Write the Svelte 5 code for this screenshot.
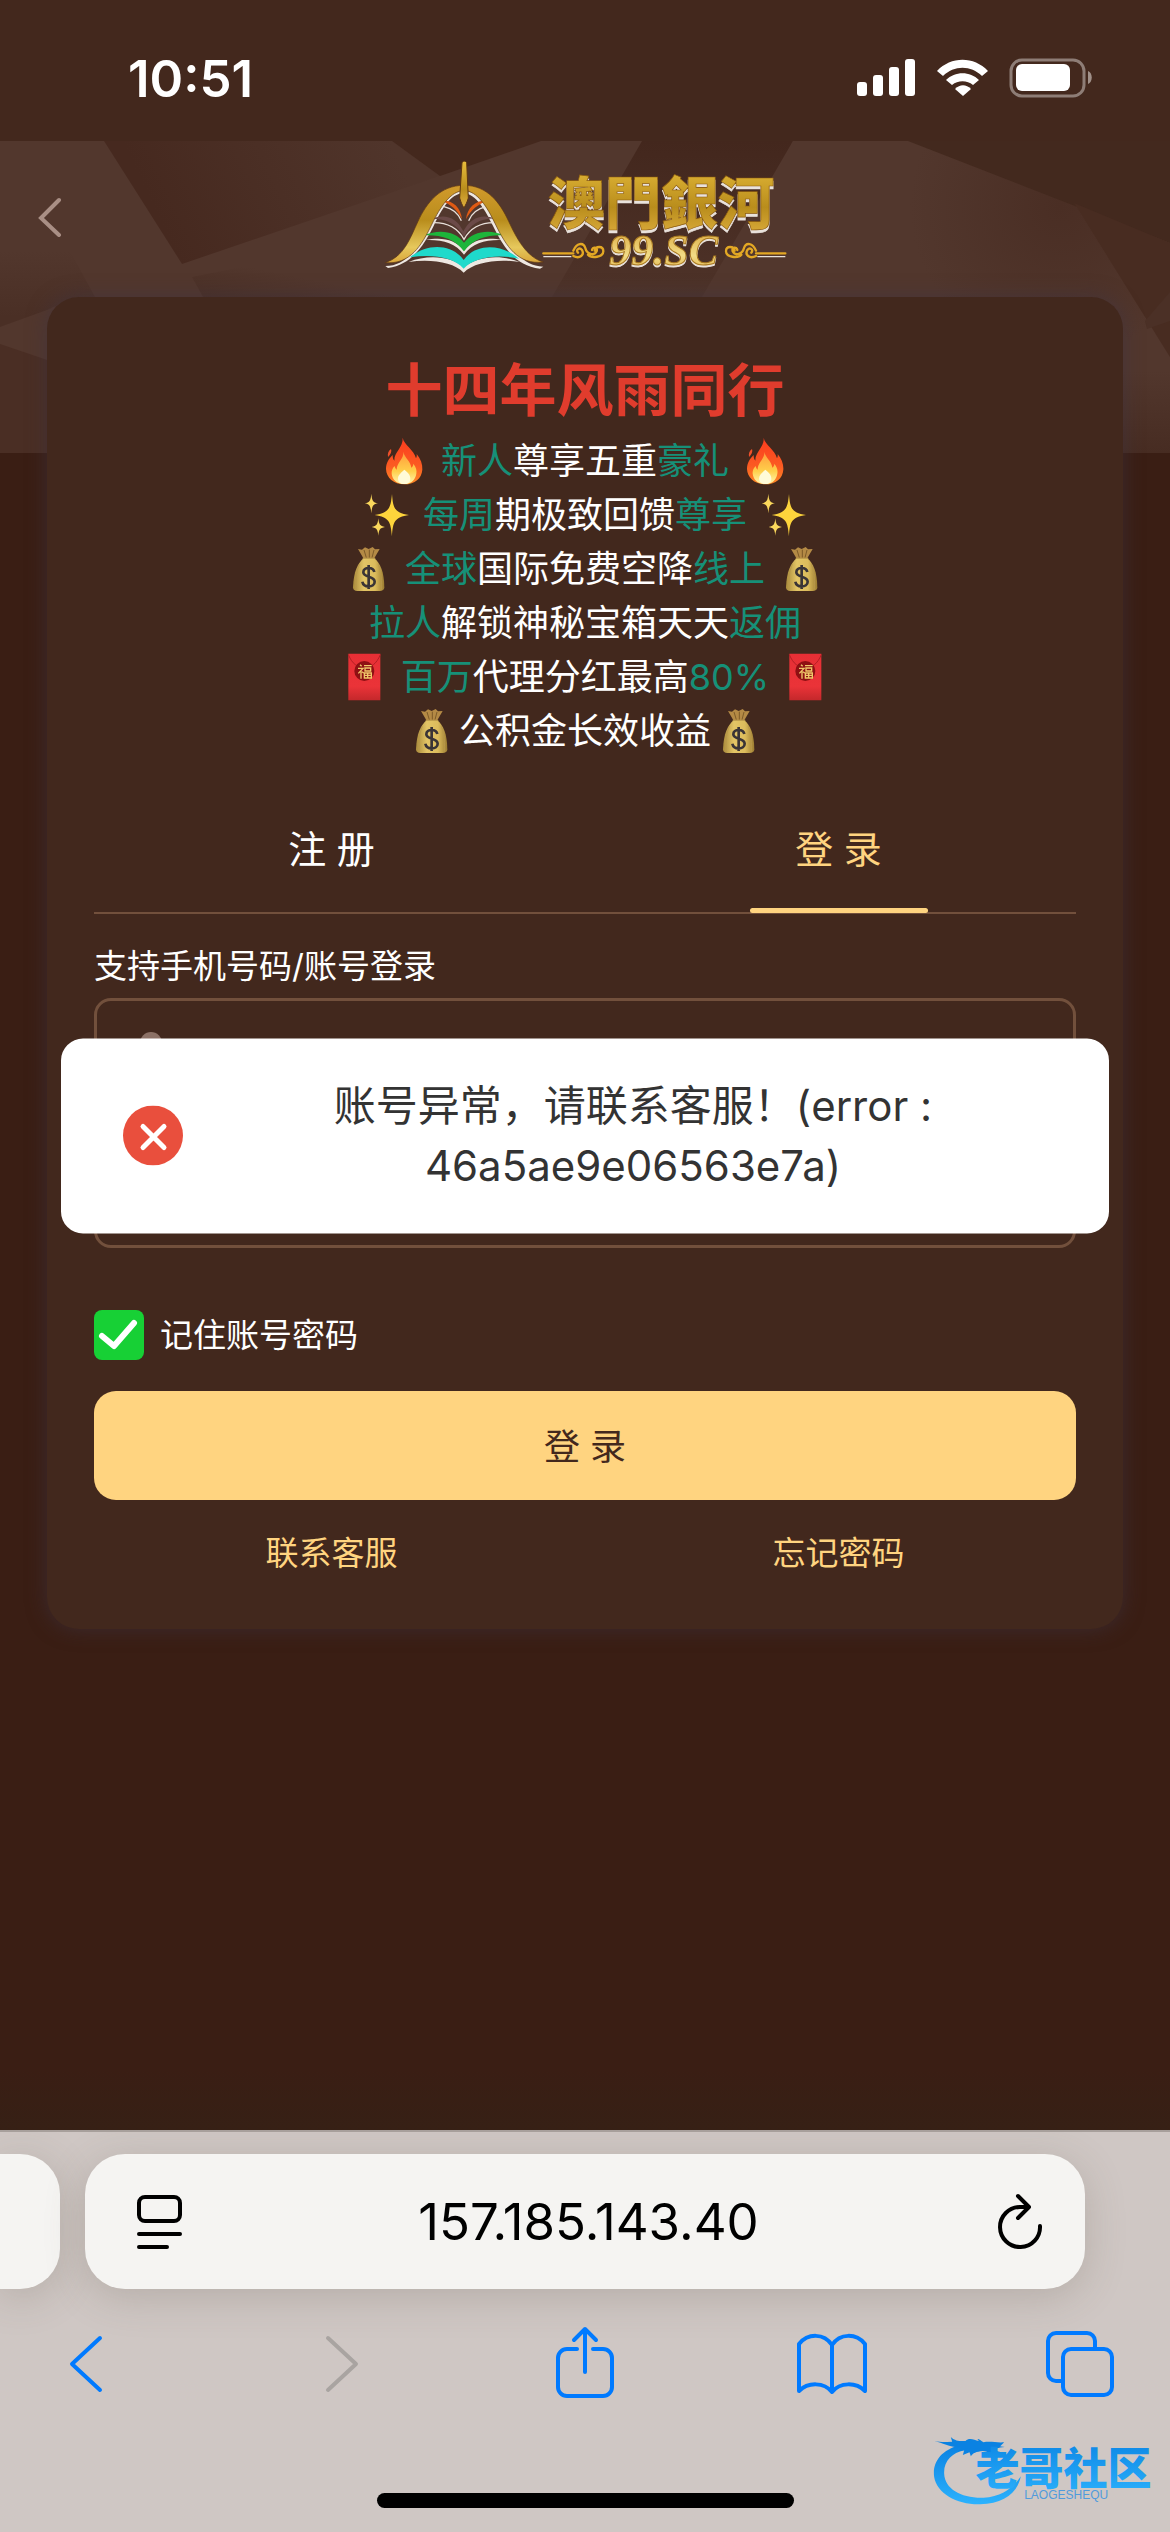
<script lang="ts">
    type Part = { text: string; accent?: boolean };
    type Promo = { icon?: string; tight?: boolean; parts: Part[] };

    const promos: Promo[] = [
        { icon: 'fire', parts: [{ text: '新人', accent: true }, { text: '尊享五重' }, { text: '豪礼', accent: true }] },
        { icon: 'sparkles', parts: [{ text: '每周', accent: true }, { text: '期极致回馈' }, { text: '尊享', accent: true }] },
        { icon: 'bag', parts: [{ text: '全球', accent: true }, { text: '国际免费空降' }, { text: '线上', accent: true }] },
        { parts: [{ text: '拉人', accent: true }, { text: '解锁神秘宝箱天天' }, { text: '返佣', accent: true }] },
        { icon: 'envelope', parts: [{ text: '百万', accent: true }, { text: '代理分红最高' }, { text: '80%', accent: true }] },
        { icon: 'bag', tight: true, parts: [{ text: '公积金长效收益' }] }
    ];

    const tabs = [
        { id: 'register', label: '注 册' },
        { id: 'login', label: '登 录' }
    ];

    let activeTab = $state('login');
    let account = $state('');
    let password = $state('');
    let remember = $state(true);
</script>

<!-- gradients shared by all the drawings -->
<svg class="defs" width="0" height="0" aria-hidden="true">
    <defs>
        <linearGradient id="gold" x1="0" y1="0" x2="0" y2="1">
            <stop offset="0" stop-color="#e8bd3c" />
            <stop offset="0.6" stop-color="#b98d1c" />
            <stop offset="1" stop-color="#e0b040" />
        </linearGradient>
        <linearGradient id="pale-gold" x1="0" y1="0" x2="0" y2="1">
            <stop offset="0" stop-color="#d9a53a" />
            <stop offset="0.6" stop-color="#f2dc86" />
            <stop offset="1" stop-color="#d9a53a" />
        </linearGradient>
        <linearGradient id="arch" x1="0" y1="0" x2="0" y2="1">
            <stop offset="0" stop-color="#d19a2c" />
            <stop offset="0.45" stop-color="#b98d1c" />
            <stop offset="0.8" stop-color="#e6c85c" />
            <stop offset="1" stop-color="#d9a53a" />
        </linearGradient>
        <linearGradient id="flame" x1="0" y1="0" x2="0" y2="1">
            <stop offset="0" stop-color="#fb3b1e" />
            <stop offset="0.6" stop-color="#fb5a22" />
            <stop offset="1" stop-color="#fd8a25" />
        </linearGradient>
        <linearGradient id="flame-inner" x1="0" y1="0" x2="0" y2="1">
            <stop offset="0" stop-color="#ff9a3c" />
            <stop offset="0.6" stop-color="#ffcf4a" />
            <stop offset="1" stop-color="#fff6b0" />
        </linearGradient>
        <linearGradient id="sack" x1="0" y1="0" x2="1" y2="0">
            <stop offset="0" stop-color="#a98a3b" />
            <stop offset="0.35" stop-color="#e3c566" />
            <stop offset="0.7" stop-color="#dcbc5c" />
            <stop offset="1" stop-color="#9c7c31" />
        </linearGradient>
        <linearGradient id="packet" x1="0" y1="0" x2="0" y2="1">
            <stop offset="0" stop-color="#e72f35" />
            <stop offset="0.7" stop-color="#ea3338" />
            <stop offset="1" stop-color="#c4282b" />
        </linearGradient>
        <linearGradient id="sea" x1="0" y1="0" x2="0" y2="1">
            <stop offset="0" stop-color="#0a82e2" />
            <stop offset="1" stop-color="#2cb2fd" />
        </linearGradient>
    </defs>
</svg>

{#snippet emoji(name: string)}
    <svg class="emoji" viewBox="0 0 135 144" aria-hidden="true">
        {#if name === 'fire'}
            <path fill="url(#flame)" d="M62 2c4 22 34 36 40 62 2-4 3-8 2-13 12 14 18 31 17 47-2 26-22 44-54 44S13 122 12 96c0-18 8-30 20-42 0 8 1 13 5 17C36 44 64 32 62 2z" />
            <path fill="#f0502a" d="M27 36c3 8-1 16-9 24-2-10 1-18 9-24z" />
            <path fill="url(#flame-inner)" d="M64 44c3 18 22 28 24 48 4-3 6-7 6-12 8 10 11 20 9 30-3 19-16 31-36 31-21 0-36-12-38-31-1-9 3-17 9-23 1 6 3 9 6 11 0-22 22-32 20-54z" />
            <path fill="#fffbd8" d="M67 98c10 8 18 15 18 27 0 10-8 16-18 16s-19-6-19-16c0-12 10-18 19-27z" />
        {:else if name === 'sparkles'}
            <path fill="#fdd43c" d="M84 9c3 42 7 56 51 63-44 7-48 20-51 64-4-44-8-57-52-64 44-7 48-21 52-63z" />
            <path fill="#fbd85c" d="M22 8c2 20 4 26 20 29-16 3-18 9-20 30-2-21-4-27-20-30 16-3 18-9 20-29zM43 82c2 18 4 23 20 26-16 3-18 8-20 26-2-18-4-23-20-26 16-3 18-8 20-26z" />
        {:else if name === 'bag'}
            <path fill="#b48a45" d="M36 12l12 2 9-7 11 5 12-6 7 7 14-1-17 29H53z" />
            <path fill="none" stroke="#7d5b28" stroke-width="3" d="M54 15l7 23M70 14v24M84 15l-6 23" />
            <path fill="url(#sack)" d="M53 39h32c18 17 29 39 30 88 0 8-6 11-14 11H34c-8 0-13-3-13-11 2-49 14-71 32-88z" />
            <path fill="none" stroke="#b8984a" stroke-width="3" d="M50 40h38M40 58c-7 16-11 30-10 76M97 58c7 16 10 34 9 76" />
            <path fill="none" stroke="#3a3436" stroke-width="8" d="M85 81c-2-9-9-12-17-12-9 0-16 5-16 13 0 17 34 9 34 28 0 9-8 14-18 14-9 0-17-4-19-14M68 60v72" />
        {:else if name === 'envelope'}
            <path fill="url(#packet)" d="M19 2h96v140H19z" />
            <path fill="none" stroke="#b31f24" stroke-width="3" d="M19 5c12 28 26 38 48 38s36-10 48-38" />
            <circle cx="67" cy="54" r="30" fill="#8e1013" />
            <path fill="none" stroke="#f0c96a" stroke-width="4" d="M54 35l5 5M48 46h15L49 61M57 54v23M60 56l5 4M66 38h23M69 45h17v9H69zM67 60h21v15H67zM77 60v15M67 67h21" />
        {/if}
    </svg>
{/snippet}

<div class="screen">
    <div class="status-bar">
        <span class="time">10:51</span>
        <svg class="status-icons" width="236" height="44" viewBox="0 0 236 44" aria-hidden="true">
            <g fill="#fff">
                <rect x="1" y="25" width="10" height="14" rx="3" />
                <rect x="17" y="18" width="10" height="21" rx="3" />
                <rect x="33" y="10" width="10" height="29" rx="3" />
                <rect x="49" y="2" width="10" height="37" rx="3" />
                <path d="M81 14c14-15 37-15 51 0l-6 5c-11-11-28-11-39 0z" />
                <path d="M90 23c9-9 24-9 33 0l-6 5c-6-5-15-5-21 0z" />
                <path d="M99 32c5-5 11-5 16 0l-8 7z" />
                <rect x="160" y="7" width="54" height="27" rx="6" />
            </g>
            <rect x="155" y="3" width="73" height="36" rx="11" fill="none" stroke="#8e7d76" stroke-width="3" />
            <path d="M232 14c5 2 5 11 0 13z" fill="#a09089" />
        </svg>
    </div>

    <main>
        <svg class="backdrop" viewBox="0 0 1170 312" preserveAspectRatio="none" aria-hidden="true">
            <defs>
                <linearGradient id="fade-a" gradientUnits="userSpaceOnUse" x1="400" y1="20" x2="180" y2="123">
                    <stop offset="0" stop-color="#50352b" />
                    <stop offset="1" stop-color="#46291f" />
                </linearGradient>
                <linearGradient id="fade-b" gradientUnits="userSpaceOnUse" x1="192" y1="156" x2="200" y2="116">
                    <stop offset="0" stop-color="#4a2f25" />
                    <stop offset="1" stop-color="#52372d" />
                </linearGradient>
                <linearGradient id="fade-c" gradientUnits="userSpaceOnUse" x1="0" y1="0" x2="0" y2="156">
                    <stop offset="0" stop-color="#43271d" />
                    <stop offset="1" stop-color="#4e3329" />
                </linearGradient>
                <radialGradient id="fade-d" gradientUnits="userSpaceOnUse" cx="1060" cy="66" r="150">
                    <stop offset="0" stop-color="#4a2e24" />
                    <stop offset="1" stop-color="#52372d" />
                </radialGradient>
                <linearGradient id="fade-e" gradientUnits="userSpaceOnUse" x1="0" y1="230" x2="0" y2="312">
                    <stop offset="0" stop-color="#52372d" />
                    <stop offset="1" stop-color="#472c22" />
                </linearGradient>
                <linearGradient id="fade-f" gradientUnits="userSpaceOnUse" x1="0" y1="110" x2="0" y2="176">
                    <stop offset="0" stop-color="#52372d" />
                    <stop offset="1" stop-color="#4a2f25" />
                </linearGradient>
            </defs>
            <path fill="#52372d" d="M0 0h1170v312H0z" />
            <path fill="url(#fade-a)" d="M104 0h288l48 35-258 88z" />
            <path fill="#44281d" d="M392 0h149L440 35z" />
            <path fill="url(#fade-b)" d="M192 136l120-24h250v44H203z" />
            <path fill="url(#fade-c)" d="M642 0h151l-91 156H552z" />
            <path fill="url(#fade-d)" d="M793 0h115l166 62 96 154H702z" />
            <path fill="#43291e" d="M908 0h262v102z" />
            <path fill="#482c21" d="M1074 62l96 40v114z" />
            <path fill="#4b3026" d="M1170 151l-25 29 2 8 23-8z" />
            <path fill="url(#fade-f)" d="M0 110h70l25 46H75l-28 13-47 17z" />
            <path fill="#4a2e24" d="M0 203l47 16v93H0z" />
            <path fill="url(#fade-e)" d="M1120 230h50v82h-50z" />
        </svg>

        <header>
            <button class="back" type="button" aria-label="返回">
                <svg width="30" height="44" viewBox="0 0 30 44"><path d="M23 7L5 25l18 17" fill="none" stroke="#a98f85" stroke-width="4" stroke-linecap="round" /></svg>
            </button>
            <svg class="logo" width="410" height="120" viewBox="60 45 1230 360" role="img" aria-label="澳門銀河 99.SC">
                <g fill="#eee8e2">
                    <path d="M76 378c70 0 95-64 124-120 26-50 50-106 110-106s86 56 112 106c30 58 60 120 128 122l-10 6c-80-10-112-70-142-130-22-44-50-96-88-96s-66 50-88 96c-30 60-66 118-138 128z" />
                    <path d="M146 366c60-24 130-16 165 16 40-32 110-40 168-16-66-10-136 0-168 32-30-32-100-42-165-32zM196 300c50-10 90-2 116 32 26-34 66-42 116-32-50-2-90 8-116 44-26-36-66-46-116-44z" />
                </g>
                <path fill="#1fdacb" d="M150 352c50-44 126-42 161 8 36-50 112-50 166-4-60-14-134-6-166 30-32-36-96-44-161-34z" />
                <path fill="#1db53a" d="M192 286c46-20 96-12 120 22 26-34 76-42 120-22-50-2-92 10-120 48-28-38-70-50-120-48z" />
                <path fill="#6b4a48" d="M216 236c40-16 74-4 94 38 22-42 56-54 96-38-44-2-74 16-94 54-20-38-54-54-96-54z" />
                <path fill="none" stroke="#e8e0da" stroke-width="4" d="M222 248c40 0 70 14 90 50 20-36 50-50 90-50M252 200c26 6 42 18 52 42M378 200c-26 6-42 18-52 42" />
                <path fill="#df5a14" d="M244 182c34-2 58 20 62 56-14-28-34-46-62-56zM382 182c-34-2-60 20-64 56 14-28 36-46 64-56z" />
                <path fill="url(#arch)" stroke="#5c3512" stroke-width="2" d="M76 368c56-18 74-72 98-124 26-56 66-108 138-108 70 0 108 52 134 108 24 52 54 108 104 122-76 10-112-48-144-114-24-50-54-100-94-100s-72 50-96 100c-32 66-66 122-140 116z" />
                <path fill="url(#gold)" stroke="#5c3512" stroke-width="3" d="M306 68c4-6 10-6 14 0l5 106c-4 14-8 20-13 30-6-10-9-16-13-30z" />
                <text class="logo-name" x="564" y="252">澳門銀河</text>
                <text class="logo-site" x="748" y="376">99.SC</text>
                <path fill="none" stroke="#e9e2dc" stroke-width="4" d="M550 350h84M1192 350h84" />
                <g fill="none" stroke="#e3a824" stroke-width="7" stroke-linecap="round">
                    <path d="M550 340h90M1188 340h88" />
                    <path d="M640 348c20 10 34-4 26-18-8-10-20 0-12 8M640 332c10-24 30-26 36-8 4 18 26 26 34 10 4-12-12-16-14-4M684 344c10 12 46 8 46-10s-24-16-26-2" />
                    <path d="M1188 348c-20 10-34-4-26-18 8-10 20 0 12 8M1188 332c-10-24-30-26-36-8-4 18-26 26-34 10-4-12 12-16 14-4M1144 344c-10 12-46 8-46-10s24-16 26-2" />
                </g>
            </svg>
        </header>

        <section class="card">
            <h1>十四年风雨同行</h1>
            <ul class="promos">
                {#each promos as promo}
                    <li class:tight={promo.tight}>
                        {#if promo.icon}{@render emoji(promo.icon)}{/if}
                        <span>{#each promo.parts as part}<span class:accent={part.accent}>{part.text}</span>{/each}</span>
                        {#if promo.icon}{@render emoji(promo.icon)}{/if}
                    </li>
                {/each}
            </ul>

            <div class="tabs">
                <div class="tab-row" role="tablist">
                    {#each tabs as tab (tab.id)}
                        <button
                            type="button"
                            role="tab"
                            class="tab"
                            class:active={activeTab === tab.id}
                            aria-selected={activeTab === tab.id}
                            onclick={() => (activeTab = tab.id)}
                        >
                            {tab.label}
                        </button>
                    {/each}
                </div>
            </div>

            <form onsubmit={(e) => e.preventDefault()}>
                <label class="hint" for="account">支持手机号码/账号登录</label>
                <div class="field">
                    <svg width="44" height="44" viewBox="0 0 44 44" aria-hidden="true">
                        <circle cx="22" cy="12" r="11" fill="#8c7166" />
                        <path d="M3 43c0-24 38-24 38 0z" fill="#8c7166" />
                    </svg>
                    <input id="account" type="text" bind:value={account} />
                </div>
                <div class="field">
                    <svg width="44" height="44" viewBox="0 0 44 44" aria-hidden="true">
                        <path d="M7 19h30v21H7zM14 19v-6a8 8 0 0 1 16 0v6" fill="none" stroke="#8c7166" stroke-width="4" />
                    </svg>
                    <input type="password" aria-label="密码" bind:value={password} />
                </div>

                <label class="remember">
                    <input type="checkbox" bind:checked={remember} />
                    记住账号密码
                </label>

                <button class="submit" type="submit">登 录</button>
            </form>

            <nav class="links">
                <a href="#service">联系客服</a>
                <a href="#forgot">忘记密码</a>
            </nav>
        </section>

        <div class="toast" role="alert">
            <svg width="60" height="60" viewBox="0 0 60 60" aria-hidden="true">
                <circle cx="30" cy="30" r="30" fill="#e94f3d" />
                <path d="M20 21l21 21M41 21L20 42" stroke="#fff" stroke-width="5" stroke-linecap="round" />
            </svg>
            <p>账号异常，请联系客服！(error : 46a5ae9e06563e7a)</p>
        </div>
    </main>

    <footer>
        <div class="address-row">
            <div class="prev-page"></div>
            <div class="address">
                <button type="button" aria-label="页面设置">
                    <svg width="54" height="60" viewBox="0 0 54 60" fill="none" stroke="#000" stroke-width="4" stroke-linecap="round">
                        <rect x="7" y="5" width="41" height="24" rx="6" />
                        <path d="M7 42h41M7 55h28" />
                    </svg>
                </button>
                <span class="url">157.185.143.40</span>
                <button type="button" aria-label="重新加载">
                    <svg width="54" height="60" viewBox="0 0 54 60" fill="none" stroke="#000" stroke-width="4" stroke-linecap="round" stroke-linejoin="round">
                        <path d="M49 34a20 20 0 1 1-20-19h8M27 4l11 11-11 11" />
                    </svg>
                </button>
            </div>
        </div>

        <div class="toolbar">
            <button type="button" aria-label="后退">
                <svg viewBox="0 0 72 80"><path d="M50 14L22 40l28 26" /></svg>
            </button>
            <button type="button" aria-label="前进" disabled>
                <svg viewBox="0 0 72 80"><path d="M29 14l28 26-28 26" /></svg>
            </button>
            <button type="button" aria-label="分享">
                <svg viewBox="0 0 72 80"><path d="M30 25h-10a9 9 0 0 0-9 9v29a9 9 0 0 0 9 9h36a9 9 0 0 0 9-9V34a9 9 0 0 0-9-9H46M38 48V5M27 16L38 5l11 11" /></svg>
            </button>
            <button type="button" aria-label="书签">
                <svg viewBox="0 0 72 80"><path d="M36 21C28 9 12 9 3 20v47c9-9 25-9 33 1 8-10 24-10 33-1V20C60 9 44 9 36 21zM36 21v47" /></svg>
            </button>
            <button type="button" aria-label="标签页">
                <svg viewBox="0 0 72 80"><path d="M18 57h-6a8 8 0 0 1-8-8V17a8 8 0 0 1 8-8h31a8 8 0 0 1 8 8v7" /><rect x="19" y="25" width="49" height="46" rx="8" /></svg>
            </button>
        </div>

        <div class="home-indicator"></div>

        <svg class="watermark" width="227" height="80" viewBox="60 25 680 240" role="img" aria-label="老哥社区">
            <path fill="url(#sea)" d="M150 76C90 92 66 130 72 172c8 50 70 84 138 82 70-2 112-34 122-84-24 36-60 62-112 64-66 2-116-26-118-72-2-38 24-62 60-70z" />
            <path fill="#0a82e2" d="M66 62c20 8 40 4 60 4l-4-14c14 14 30 12 44 12 12-12 26-2 40 0-10-12 4-4 14 4 20-4 40 2 62 0l-12 12 14 2c-20 2-30 6-40 8l30 8c-20 10-40-2-56-4-20 2-30 6-36 16l-4-12-20 8 4-14-16 2 8-12c-30 4-50-10-88-20z" />
            <text class="mark-name" x="196" y="197" fill="url(#sea)">老哥社区</text>
            <text class="mark-sub" x="342" y="238" fill="#4f9bdc">LAOGESHEQU</text>
        </svg>
    </footer>
</div>

<style>
    :global(body) {
        background: #3a1e14;
    }

    .defs {
        position: absolute;
    }

    .screen {
        display: flex;
        flex-direction: column;
        min-height: 100vh;
        background: #43281d;
        color: #fff;
        font-family: Inter, 'Noto Sans CJK SC', sans-serif;
    }

    button,
    input {
        font: inherit;
    }

    button {
        padding: 0;
        border: 0;
        background: none;
        color: inherit;
        cursor: pointer;
    }

    svg {
        display: block;
        flex: none;
    }

    .status-bar {
        display: flex;
        justify-content: space-between;
        align-items: center;
        height: 141px;
        padding: 0 78px 0 128px;
        box-sizing: border-box;
    }

    .time {
        padding-top: 16px;
        font-size: 51px;
        font-weight: 600;
        line-height: 60px;
    }

    .status-icons {
        margin-top: 16px;
    }

    main {
        position: relative;
        flex: 1;
        background: linear-gradient(#3a1e14 97%, #362015);
    }

    .backdrop {
        position: absolute;
        top: 0;
        left: 0;
        width: 100%;
        height: 312px;
    }

    header {
        position: relative;
        display: grid;
        grid-template-columns: 1fr auto 1fr;
        align-items: center;
        padding: 14px 36px 22px;
    }

    .back {
        justify-self: start;
    }

    .logo {
        overflow: visible;
    }

    .logo-name {
        fill: url(#gold);
        stroke: #8a5a10;
        stroke-width: 2px;
        font-family: 'Noto Sans CJK TC', sans-serif;
        font-size: 170px;
        font-weight: 900;
        filter: drop-shadow(0 9px 0 #e9e2dc);
    }

    .logo-site {
        fill: url(#pale-gold);
        stroke: #a87820;
        stroke-width: 3px;
        font-family: 'Liberation Serif', serif;
        font-size: 132px;
        font-style: italic;
        font-weight: 700;
        filter: drop-shadow(0 6px 0 #e9e2dc);
    }

    .card {
        position: relative;
        margin: 0 47px;
        padding: 51px 47px 54px;
        border-radius: 32px;
        background: #42281d;
        box-shadow: 0 0 20px rgba(62, 52, 66, 0.6);
    }

    h1 {
        margin: 0;
        color: #e03c2d;
        font-size: 57px;
        font-weight: 700;
        line-height: 86px;
        text-align: center;
    }

    .promos {
        margin: 0;
        padding: 0;
        list-style: none;
        font-size: 36px;
        line-height: 54px;
    }

    .promos li {
        display: flex;
        justify-content: center;
        align-items: center;
        gap: 14px;
        height: 54px;
    }

    .promos li.tight {
        gap: 5px;
    }

    .emoji {
        width: 45px;
        height: 48px;
    }

    .accent {
        color: #169078;
    }

    .tabs {
        margin-top: 31px;
        border-bottom: 2px solid #72503c;
    }

    .tab-row {
        display: grid;
        grid-template-columns: 1fr 1fr;
        margin: 0 -16px;
    }

    .tab {
        position: relative;
        height: 123px;
        padding-bottom: 8px;
        font-size: 38px;
    }

    .tab.active {
        color: #ffd480;
    }

    .tab.active::after {
        content: '';
        position: absolute;
        bottom: -1px;
        left: 50%;
        width: 178px;
        height: 5px;
        margin-left: -89px;
        border-radius: 3px;
        background: #ffd480;
    }

    .hint {
        display: block;
        margin: 30px 0 10px;
        font-size: 33px;
        line-height: 44px;
    }

    .field {
        display: flex;
        align-items: center;
        gap: 24px;
        height: 110px;
        padding: 0 32px;
        box-sizing: border-box;
        border: 3px solid #72503c;
        border-radius: 17px;
    }

    .field + .field {
        margin-top: 30px;
    }

    .field input {
        flex: 1;
        min-width: 0;
        border: 0;
        outline: 0;
        background: none;
        color: #fff;
        font-size: 36px;
    }

    .remember {
        display: flex;
        align-items: center;
        gap: 16px;
        margin-top: 62px;
        font-size: 33px;
        line-height: 50px;
    }

    .remember input {
        appearance: none;
        width: 50px;
        height: 50px;
        margin: 0;
        border-radius: 8px;
        background: #5a3f33;
    }

    .remember input:checked {
        background: #17d035 url("data:image/svg+xml,%3Csvg xmlns='http://www.w3.org/2000/svg' viewBox='0 0 50 50'%3E%3Cpath d='M8 26l12 10L40 13' fill='none' stroke='white' stroke-width='6' stroke-linecap='round' stroke-linejoin='round'/%3E%3C/svg%3E");
    }

    .submit {
        width: 100%;
        height: 109px;
        margin-top: 31px;
        padding-bottom: 4px;
        border-radius: 22px;
        background: #ffd480;
        color: #43281d;
        font-size: 36px;
    }

    .links {
        display: grid;
        grid-template-columns: 1fr 1fr;
        margin: 31px -16px 0;
        font-size: 33px;
        line-height: 44px;
        text-align: center;
    }

    .links a {
        color: #ffd480;
        text-decoration: none;
    }

    .toast {
        position: absolute;
        top: 50%;
        left: 61px;
        right: 61px;
        display: flex;
        align-items: center;
        gap: 36px;
        padding: 37px 62px 38px;
        transform: translateY(-50%);
        border-radius: 22px;
        background: #fff;
        color: #333;
        font-size: 42px;
        line-height: 60px;
    }

    .toast p {
        flex: 1;
        margin: 0;
        text-align: center;
    }

    footer {
        position: relative;
        padding-bottom: 24px;
        border-top: 2px solid #a79f9b;
        background: #cfc7c4;
        color: #000;
        overflow: hidden;
    }

    .address-row {
        display: flex;
        gap: 25px;
        height: 135px;
        margin-top: 22px;
        padding-right: 85px;
    }

    .prev-page,
    .address {
        background: #f5f4f2;
        box-shadow: 0 8px 40px rgba(90, 80, 70, 0.22);
    }

    .prev-page {
        width: 60px;
        border-radius: 0 40px 40px 0;
    }

    .address {
        flex: 1;
        display: flex;
        justify-content: space-between;
        align-items: center;
        padding: 0 40px 0 47px;
        border-radius: 40px;
    }

    .url {
        font-size: 51px;
    }

    .toolbar {
        display: flex;
        justify-content: space-between;
        margin-top: 35px;
        padding: 0 54px 0 50px;
    }

    .toolbar svg {
        width: 72px;
        height: 80px;
        fill: none;
        stroke: #007aff;
        stroke-width: 4;
        stroke-linecap: round;
        stroke-linejoin: round;
    }

    .toolbar button:disabled svg {
        stroke: #a9a4a1;
    }

    .home-indicator {
        width: 417px;
        height: 15px;
        margin: 89px auto 0;
        border-radius: 8px;
        background: #000;
    }

    .watermark {
        position: absolute;
        right: 13px;
        bottom: 24px;
    }

    .mark-name {
        font-family: 'Noto Sans CJK SC', sans-serif;
        font-size: 132px;
        font-weight: 900;
    }

    .mark-sub {
        font-family: 'Liberation Sans', sans-serif;
        font-size: 36px;
    }
</style>
